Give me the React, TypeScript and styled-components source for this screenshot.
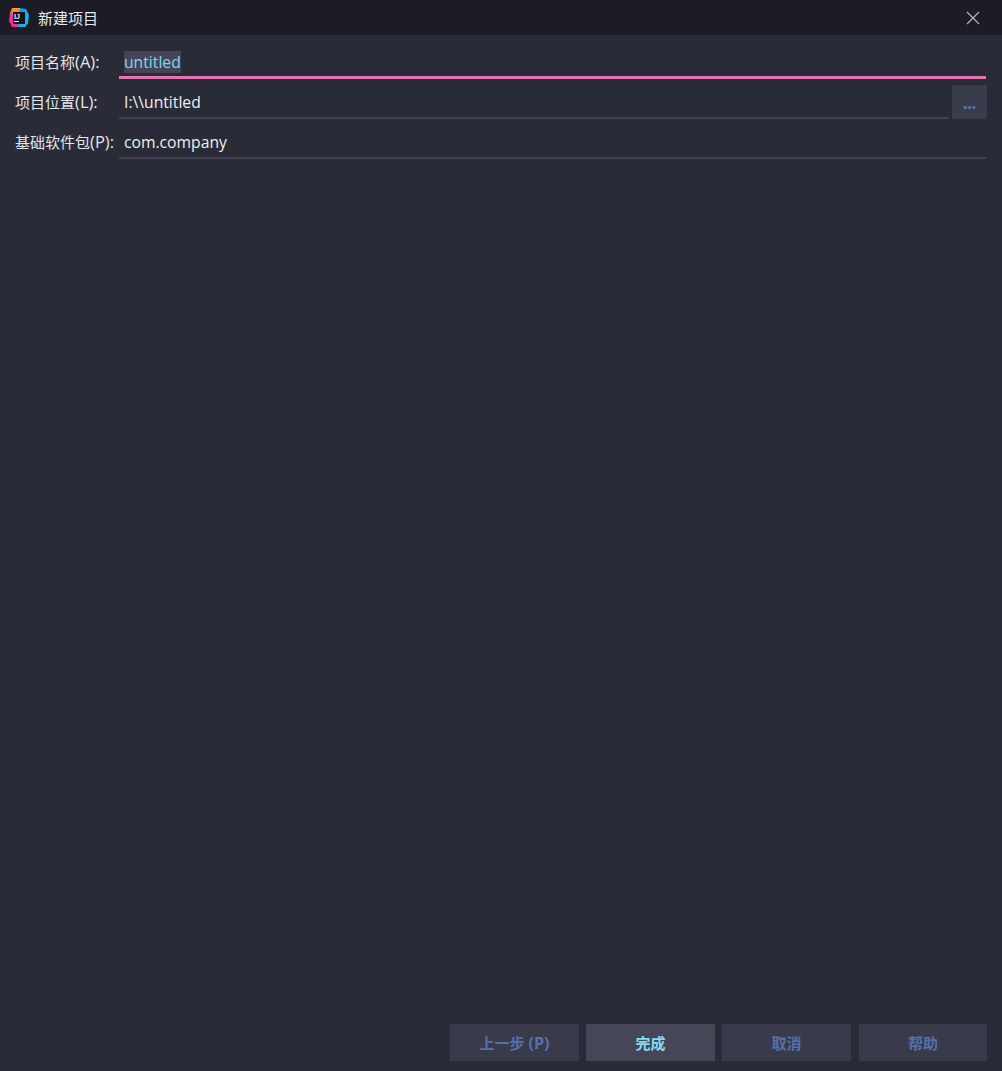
import React from "react";
import styled, { createGlobalStyle } from "styled-components";

const Global = createGlobalStyle`
  html, body { margin: 0; padding: 0; background: #292b36; }
  body { font-family: "Open Sans", "Noto Sans CJK SC", sans-serif; }
`;

const Dialog = styled.div`
  width: 1002px;
  height: 1071px;
  display: flex;
  flex-direction: column;
  background: #292b36;
  color: #e6e8ee;
  overflow: hidden;
`;

const TitleBar = styled.header`
  height: 35px;
  flex: none;
  display: flex;
  align-items: center;
  background: #1b1c25;
  padding: 0 21px 0 9px;
  box-sizing: border-box;
`;

const Title = styled.span`
  margin-left: 9px;
  font-size: 15px;
  color: #e8e9ee;
  flex: 1;
`;

const CloseButton = styled.button`
  all: unset;
  width: 16px;
  height: 16px;
  display: flex;
`;

const Form = styled.main`
  flex: 1;
  display: flex;
  flex-direction: column;
  padding: 10px 15px 0 15px;
  gap: 6px;
`;

const Row = styled.div`
  display: flex;
  height: 34px;
  align-items: stretch;
`;

const Label = styled.label`
  width: 104px;
  flex: none;
  font-size: 15px;
  line-height: 24px;
  padding-top: 5px;
  color: #e4e6ec;
`;

const Mnemonic = styled.span`
  font-size: 16.5px;
`;

const Field = styled.div<{ $focused?: boolean }>`
  flex: 1;
  display: flex;
  align-items: flex-start;
  box-sizing: border-box;
  height: 34px;
  margin-right: 1px;
  padding: 6px 0 0 5px;
  font-size: 15.7px;
  line-height: 22px;
  color: #eef0f4;
  border-bottom: ${(p) => (p.$focused ? "3px solid #e873b3" : "2px solid #3f4151")};
`;

const Selected = styled.span`
  background: #444657;
  color: #80d8f0;
  height: 22px;
`;

const BrowseButton = styled.button`
  all: unset;
  width: 35px;
  height: 34px;
  margin-left: 2px;
  background: #3a3c4b;
  color: #5571b4;
  font-size: 15px;
  font-weight: 800;
  text-align: center;
  line-height: 36px;
`;

const Footer = styled.footer`
  flex: none;
  display: flex;
  justify-content: flex-end;
  gap: 7px;
  padding: 0 15px 10px 0;
`;

const ActionButton = styled.button<{ $primary?: boolean }>`
  all: unset;
  width: 129px;
  height: 37px;
  text-align: center;
  font-size: 15px;
  font-weight: 700;
  line-height: 38px;
  background: ${(p) => (p.$primary ? "#454759" : "#393b4a")};
  color: ${(p) => (p.$primary ? "#84dcf4" : "#5670ac")};
  &:last-child {
    width: 128px;
    margin-left: 1px;
  }
`;

const Hotkey = styled.span`
  font-size: 16px;
`;

const Logo = () => (
  <svg width="20" height="20" viewBox="0 0 20 20">
    <defs>
      <linearGradient id="lg1" x1="0" y1="0" x2="0" y2="1">
        <stop offset="0" stopColor="#f7a51e" />
        <stop offset="0.45" stopColor="#f0319a" />
        <stop offset="1" stopColor="#e92d8f" />
      </linearGradient>
      <linearGradient id="lg2" x1="0" y1="0" x2="1" y2="1">
        <stop offset="0" stopColor="#0b8fe0" />
        <stop offset="1" stopColor="#19c6f2" />
      </linearGradient>
    </defs>
    <path d="M3 0h8v19H3L0 13l1-8z" fill="url(#lg1)" />
    <path d="M11 0l6 1 3 6-1 8-3 4H9z" fill="url(#lg2)" />
    <rect x="4" y="4" width="12" height="12" fill="#14121c" />
    <rect x="5" y="13" width="5" height="1" fill="#e6e6e6" />
    <text x="5" y="11" fontSize="7" fontWeight="700" fontFamily="'Liberation Sans', sans-serif" fill="#f2f2f2">IJ</text>
  </svg>
);

const CloseIcon = () => (
  <svg width="16" height="16" viewBox="0 0 16 16">
    <path d="M2 2l12 12M14 2L2 14" stroke="#b4b6bc" strokeWidth="1.2" fill="none" />
  </svg>
);

export default function App() {
  return (
    <Dialog>
      <Global />
      <TitleBar>
        <Logo />
        <Title>新建项目</Title>
        <CloseButton aria-label="关闭">
          <CloseIcon />
        </CloseButton>
      </TitleBar>
      <Form>
        <Row>
          <Label>项目名称<Mnemonic>(A):</Mnemonic></Label>
          <Field $focused>
            <Selected>untitled</Selected>
          </Field>
        </Row>
        <Row>
          <Label>项目位置<Mnemonic>(L):</Mnemonic></Label>
          <Field>I:\\untitled</Field>
          <BrowseButton>...</BrowseButton>
        </Row>
        <Row>
          <Label>基础软件包<Mnemonic>(P):</Mnemonic></Label>
          <Field>com.company</Field>
        </Row>
      </Form>
      <Footer>
        <ActionButton>上一步 <Hotkey>(P)</Hotkey></ActionButton>
        <ActionButton $primary>完成</ActionButton>
        <ActionButton>取消</ActionButton>
        <ActionButton>帮助</ActionButton>
      </Footer>
    </Dialog>
  );
}
